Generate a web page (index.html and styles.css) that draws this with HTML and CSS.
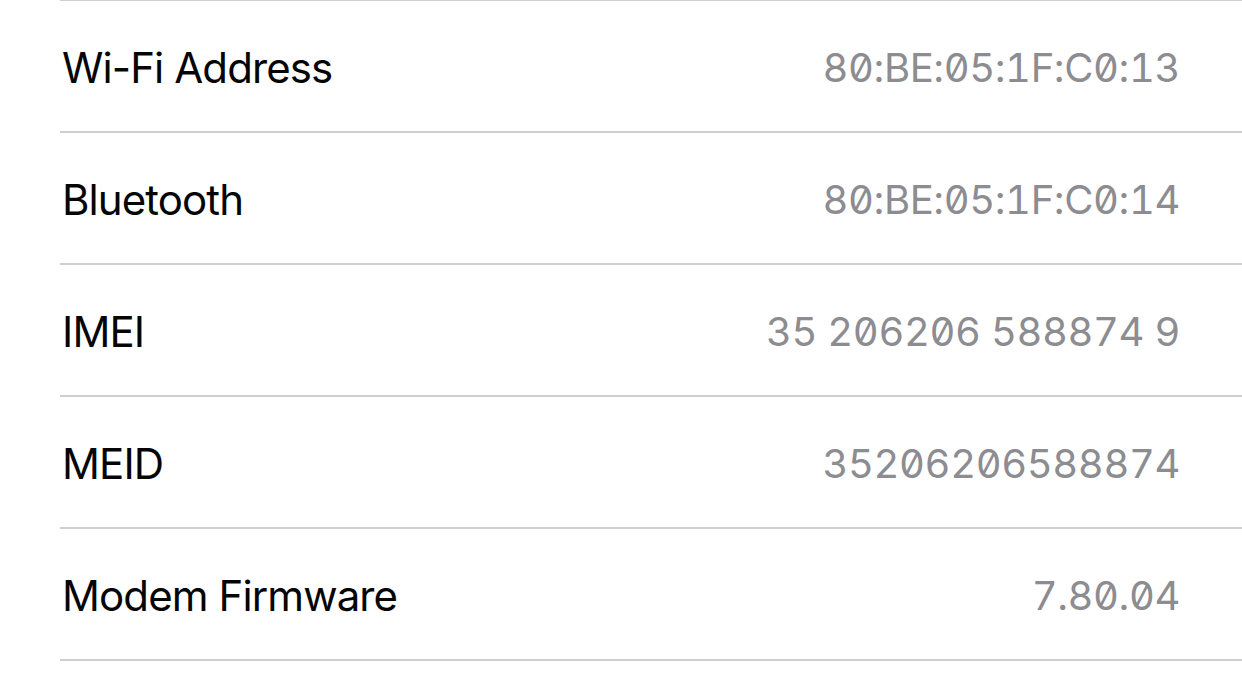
FILE: index.html
```html
<!DOCTYPE html>
<html>
<head>
<meta charset="utf-8">
<link rel="stylesheet" href="styles.css">
</head>
<body>
<div class="list">
  <div class="row"><span class="label">Wi-Fi Address</span><span class="value">80:BE:05:1F:C0:13</span></div>
  <div class="row"><span class="label">Bluetooth</span><span class="value">80:BE:05:1F:C0:14</span></div>
  <div class="row"><span class="label">IMEI</span><span class="value">35 206206 588874 9</span></div>
  <div class="row"><span class="label">MEID</span><span class="value">35206206588874</span></div>
  <div class="row"><span class="label">Modem Firmware</span><span class="value">7.80.04</span></div>
</div>
</body>
</html>
```
FILE: styles.css
```css
html, body {
  margin: 0;
  padding: 0;
  background: #ffffff;
}
body {
  width: 1242px;
  height: 680px;
  overflow: hidden;
  font-family: Inter, "Liberation Sans", sans-serif;
}
.list {
  margin-top: -1px;
  margin-left: 60px;
  border-top: 2px solid #cfcfd3;
}
.row {
  height: 130px;
  border-bottom: 2px solid #cfcfd3;
  display: flex;
  align-items: center;
  justify-content: space-between;
  padding: 2px 62px 0 2px;
  box-sizing: border-box;
  height: 132px;
}
.label {
  font-size: 42px;
  color: #050505;
  letter-spacing: -0.9px;
}
.value {
  font-size: 40px;
  color: #8c8c91;
  letter-spacing: -0.4px;
  font-feature-settings: "tnum" 1, "zero" 1;
}
```
